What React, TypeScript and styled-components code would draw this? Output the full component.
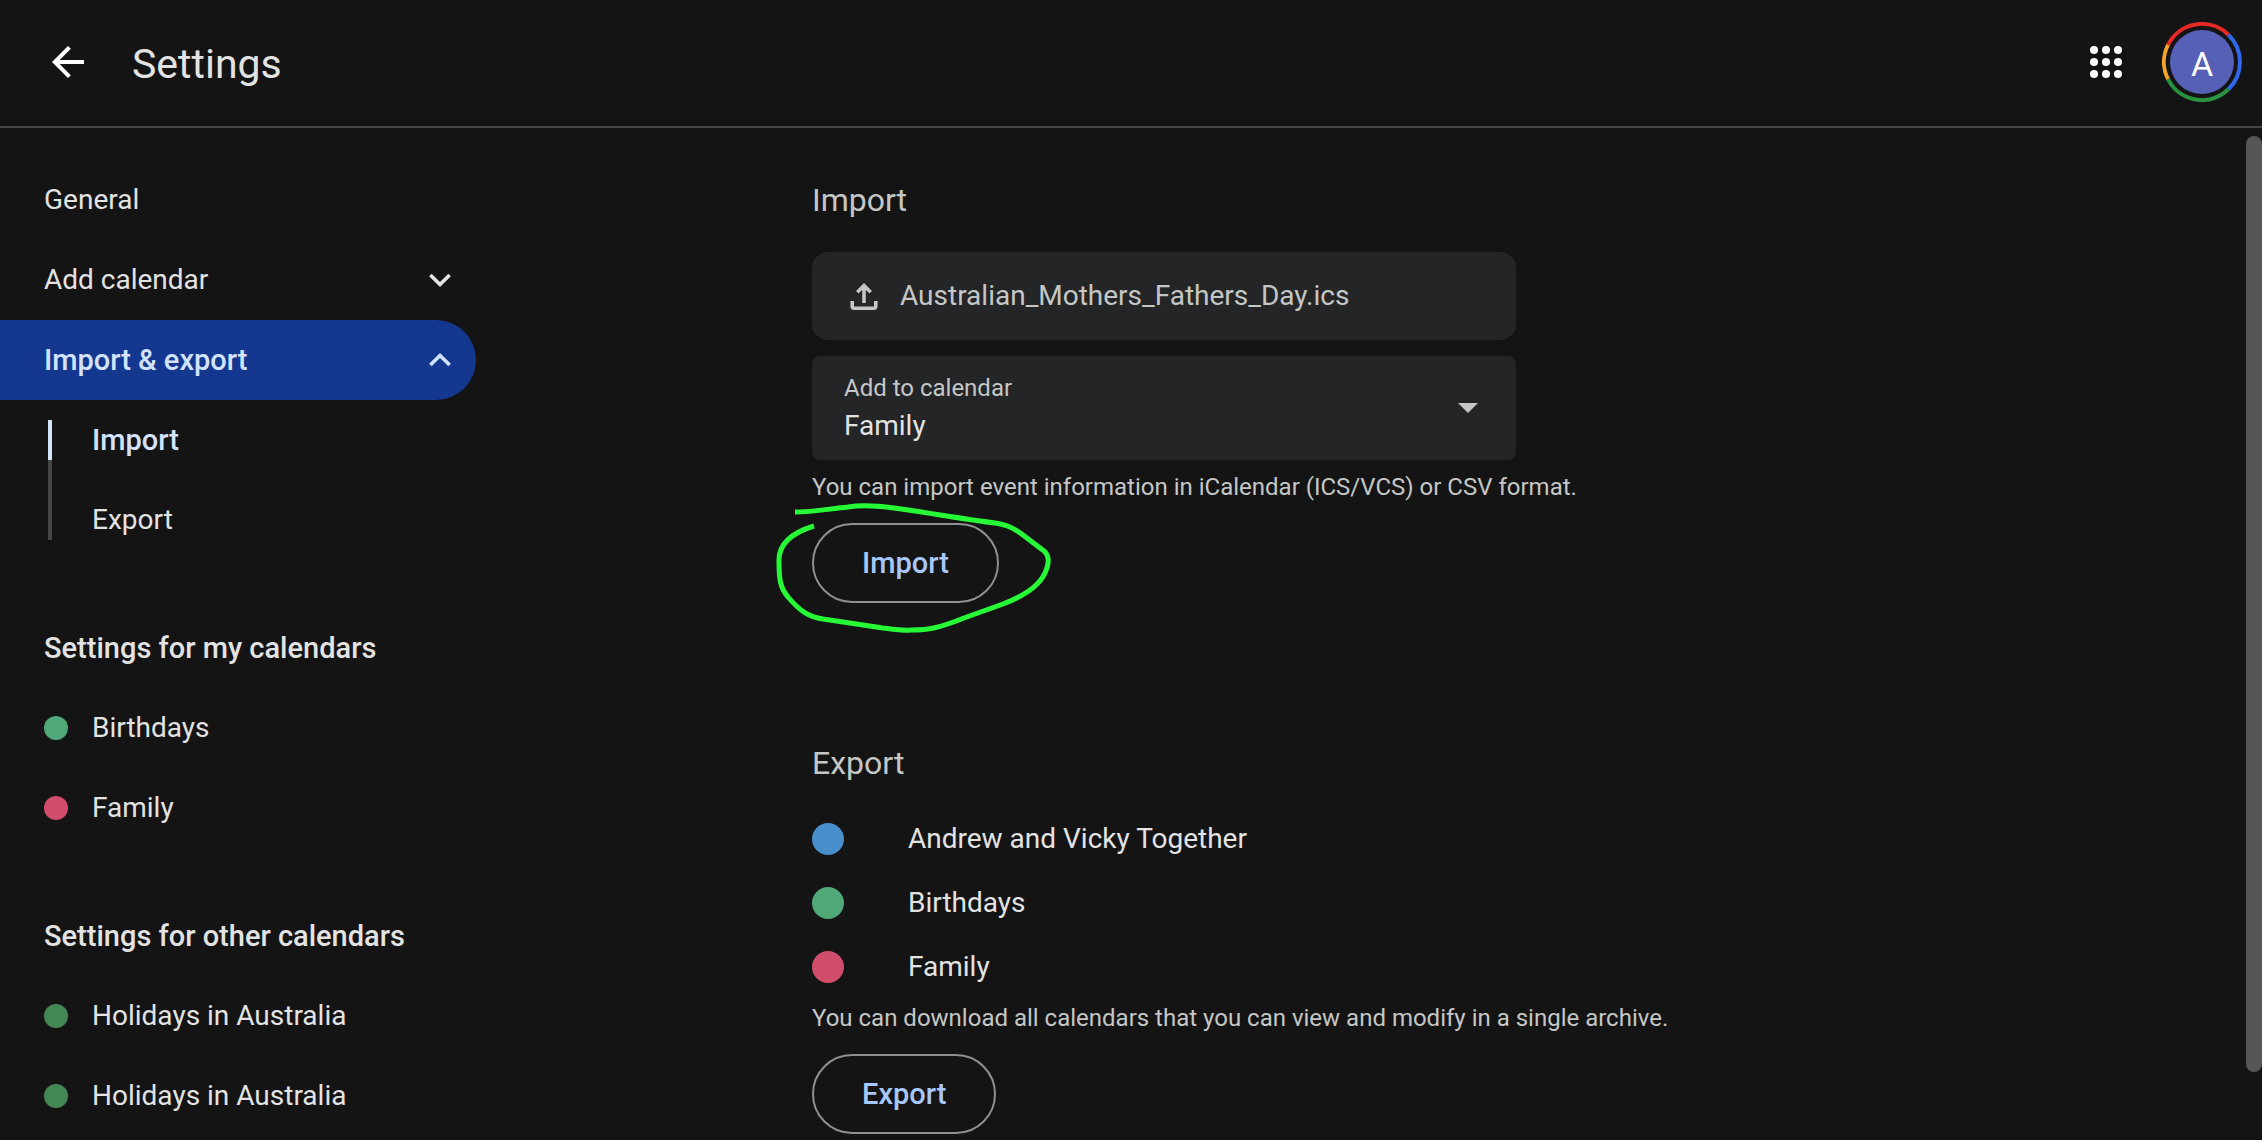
import React from "react";
import styled, { createGlobalStyle } from "styled-components";

const GlobalStyle = createGlobalStyle`
  *, *::before, *::after { box-sizing: border-box; }
  body {
    margin: 0;
    background: #141414;
    color: #e3e3e3;
    font-family: Roboto, "Liberation Sans", sans-serif;
    font-size: 28px;
    line-height: 40px;
  }
  button, select, input { font: inherit; color: inherit; }
  h1, h2, p, ul { margin: 0; padding: 0; }
  ul { list-style: none; }
  svg { display: block; flex: none; }
`;

const Page = styled.div`
  display: flex;
  flex-direction: column;
  height: 100vh;
  overflow: hidden;
`;

const TopBar = styled.header`
  display: flex;
  flex: none;
  align-items: center;
  height: 128px;
  padding: 0 20px 2px 44px;
  border-bottom: 2px solid #444746;
`;

const IconButton = styled.button`
  display: flex;
  padding: 0;
  border: 0;
  background: none;
  color: #fff;
  cursor: pointer;
`;

const Title = styled.h1`
  flex: 1;
  padding: 4px 0 0 40px;
  font-size: 41px;
  font-weight: 400;
  line-height: 48px;
`;

const AvatarButton = styled(IconButton)`
  position: relative;
  align-items: center;
  justify-content: center;
  width: 80px;
  height: 80px;
  margin-left: 32px;
`;

const AvatarRing = styled.svg`
  position: absolute;
  inset: 0;
`;

const AvatarDisc = styled.span`
  width: 64px;
  height: 64px;
  padding-top: 2px;
  border-radius: 50%;
  background: #5560b6;
  font-size: 34px;
  line-height: 64px;
  text-align: center;
`;

const Body = styled.div`
  display: flex;
  flex: 1;
  min-height: 0;
`;

const Sidebar = styled.nav`
  display: flex;
  flex: none;
  flex-direction: column;
  gap: 48px;
  width: 476px;
  padding-top: 32px;
`;

const NavButton = styled.button<{ $active?: boolean }>`
  display: flex;
  align-items: center;
  justify-content: space-between;
  width: 100%;
  height: 80px;
  padding: 0 24px 0 44px;
  border: 0;
  border-radius: 0 40px 40px 0;
  background: ${(p) => (p.$active ? "#14388f" : "none")};
  color: ${(p) => (p.$active ? "#d3e3fd" : "#e3e3e3")};
  font-size: ${(p) => (p.$active ? 29 : 28)}px;
  font-weight: ${(p) => (p.$active ? 500 : 400)};
  text-align: left;
  cursor: pointer;
`;

const SubList = styled.ul`
  position: relative;
  &::before {
    content: "";
    position: absolute;
    top: 20px;
    bottom: 20px;
    left: 48px;
    width: 4px;
    background: #444746;
  }
`;

const SubLink = styled.a<{ $active?: boolean }>`
  position: relative;
  display: flex;
  align-items: center;
  height: 80px;
  padding-left: 92px;
  color: ${(p) => (p.$active ? "#d3e3fd" : "#e3e3e3")};
  font-size: ${(p) => (p.$active ? 29 : 28)}px;
  font-weight: ${(p) => (p.$active ? 500 : 400)};
  text-decoration: none;
  &::before {
    content: "";
    display: ${(p) => (p.$active ? "block" : "none")};
    position: absolute;
    top: 20px;
    left: 48px;
    width: 4px;
    height: 40px;
    background: #d3e3fd;
  }
`;

const GroupTitle = styled.h2`
  padding: 20px 0 20px 44px;
  font-size: 29px;
  font-weight: 500;
  line-height: 40px;
`;

const CalendarLink = styled.a`
  display: flex;
  align-items: center;
  gap: 24px;
  height: 80px;
  padding-left: 44px;
  color: #e3e3e3;
  text-decoration: none;
`;

const Dot = styled.span<{ $color: string; $size: number }>`
  flex: none;
  width: ${(p) => p.$size}px;
  height: ${(p) => p.$size}px;
  border-radius: 50%;
  background: ${(p) => p.$color};
`;

const Content = styled.main`
  display: flex;
  flex: 1;
  flex-direction: column;
  gap: 136px;
  padding: 48px 0 0 336px;
`;

const Section = styled.section`
  display: flex;
  flex-direction: column;
  align-items: flex-start;
`;

const SectionTitle = styled.h2`
  color: #c4c7c5;
  font-size: 32px;
  font-weight: 400;
  line-height: 48px;
`;

const Fields = styled.div`
  display: grid;
  gap: 16px;
  width: 100%;
  max-width: 704px;
  padding: 28px 0 8px;
`;

const FileField = styled.label`
  display: flex;
  align-items: center;
  gap: 20px;
  height: 88px;
  padding: 0 36px;
  border-radius: 16px;
  background: #242527;
  color: #c4c7c5;
  cursor: pointer;
`;

const HiddenFile = styled.input`
  position: absolute;
  width: 1px;
  height: 1px;
  opacity: 0;
`;

const SelectField = styled.div`
  display: grid;
  align-items: center;
  border-radius: 8px;
  background: #242527;
  > * { grid-area: 1 / 1; }
`;

const SelectLabel = styled.label`
  align-self: start;
  padding: 16px 32px 0;
  color: #c4c7c5;
  font-size: 24px;
  line-height: 32px;
`;

const Select = styled.select`
  width: 100%;
  height: 104px;
  padding: 36px 32px 0;
  border: 0;
  border-radius: 8px;
  background: none;
  appearance: none;
  option { background: #242527; }
`;

const Caret = styled.svg`
  justify-self: end;
  margin-right: 38px;
  color: #c4c7c5;
  pointer-events: none;
`;

const Hint = styled.p`
  color: #c4c7c5;
  font-size: 24px;
  line-height: 38px;
`;

const Action = styled.div`
  position: relative;
  padding-top: 17px;
`;

const OutlineButton = styled.button`
  display: block;
  height: 80px;
  padding: 0 48px;
  border: 2px solid #8e918f;
  border-radius: 40px;
  background: none;
  color: #a8c7fa;
  font-size: 29px;
  font-weight: 500;
  cursor: pointer;
`;

const Highlight = styled.svg`
  position: absolute;
  top: -26px;
  left: -52px;
  pointer-events: none;
`;

const ExportList = styled.ul`
  padding: 20px 0 0;
`;

const ExportItem = styled.li`
  display: flex;
  align-items: center;
  gap: 64px;
  height: 64px;
`;

const ScrollTrack = styled.div`
  flex: none;
  width: 16px;
  padding: 8px 0;
`;

const ScrollThumb = styled.div`
  height: 94%;
  border-radius: 8px;
  background: #565656;
`;

const Chevron = ({ up }: { up?: boolean }) => (
  <svg width="24" height="24" viewBox="0 0 24 24" fill="none" stroke="currentColor" strokeWidth="3.6" aria-hidden="true">
    <path d={up ? "M2.4 17 12 7.500 21.600 17" : "M2.4 7 12 16.500 21.600 7"} />
  </svg>
);

const myCalendars = [
  { name: "Birthdays", color: "#51a877" },
  { name: "Family", color: "#d14d6c" },
];

const otherCalendars = [
  { name: "Holidays in Australia", color: "#438755" },
  { name: "Holidays in Australia", color: "#438755" },
];

const exportCalendars = [{ name: "Andrew and Vicky Together", color: "#488fcb" }, ...myCalendars];

type Calendar = { name: string; color: string };

const CalendarGroup = ({ title, items }: { title: string; items: Calendar[] }) => (
  <div>
    <GroupTitle>{title}</GroupTitle>
    <ul>
      {items.map((item, i) => (
        <li key={i}>
          <CalendarLink href="#">
            <Dot $color={item.color} $size={24} />
            {item.name}
          </CalendarLink>
        </li>
      ))}
    </ul>
  </div>
);

export default function App() {
  return (
    <Page>
      <GlobalStyle />
      <TopBar>
        <IconButton aria-label="Go back">
          <svg width="48" height="48" viewBox="0 0 24 24" fill="currentColor" aria-hidden="true">
            <path d="M20 11H7.83l5.59-5.59L12 4l-8 8 8 8 1.41-1.41L7.83 13H20v-2z" />
          </svg>
        </IconButton>
        <Title>Settings</Title>
        <IconButton aria-label="Google apps">
          <svg width="48" height="48" viewBox="0 0 48 48" fill="currentColor" aria-hidden="true">
            {[12, 24, 36].map((y) => [12, 24, 36].map((x) => <circle key={`${x}-${y}`} cx={x} cy={y} r="4" />))}
          </svg>
        </IconButton>
        <AvatarButton aria-label="Account">
          <AvatarRing width="80" height="80" viewBox="0 0 80 80" fill="none" strokeWidth="4" aria-hidden="true">
            <path d="M6 22.8A38 38 0 0 1 66.4 12.7" stroke="#e52a25" />
            <path d="M66.4 12.7A38 38 0 0 1 66.4 67.3" stroke="#2f68ea" />
            <path d="M66.4 67.3A38 38 0 0 1 6 57.2" stroke="#2a9342" />
            <path d="M6 57.2A38 38 0 0 1 6 22.8" stroke="#f5a42c" />
          </AvatarRing>
          <AvatarDisc>A</AvatarDisc>
        </AvatarButton>
      </TopBar>
      <Body>
        <Sidebar>
          <div>
            <NavButton>General</NavButton>
            <NavButton aria-expanded="false">
              Add calendar
              <Chevron />
            </NavButton>
            <NavButton $active aria-expanded="true">
              Import &amp; export
              <Chevron up />
            </NavButton>
            <SubList>
              <li>
                <SubLink $active href="#import">Import</SubLink>
              </li>
              <li>
                <SubLink href="#export">Export</SubLink>
              </li>
            </SubList>
          </div>
          <CalendarGroup title="Settings for my calendars" items={myCalendars} />
          <CalendarGroup title="Settings for other calendars" items={otherCalendars} />
        </Sidebar>
        <Content>
          <Section id="import">
            <SectionTitle>Import</SectionTitle>
            <Fields>
              <FileField>
                <HiddenFile type="file" />
                <svg width="32" height="32" viewBox="0 0 32 32" fill="none" stroke="currentColor" strokeWidth="3.6" aria-hidden="true">
                  <path d="M16 23V6M9.300 12.300 16 5.600l6.700 6.700" />
                  <path d="M4.200 21v5.200a2 2 0 0 0 2 2h19.600a2 2 0 0 0 2-2V21" />
                </svg>
                Australian_Mothers_Fathers_Day.ics
              </FileField>
              <SelectField>
                <SelectLabel htmlFor="target">Add to calendar</SelectLabel>
                <Select id="target" defaultValue="Family">
                  <option>Family</option>
                  <option>Birthdays</option>
                </Select>
                <Caret width="20" height="10" viewBox="0 0 20 10" fill="currentColor" aria-hidden="true">
                  <path d="M0 0h20L10 10z" />
                </Caret>
              </SelectField>
            </Fields>
            <Hint>You can import event information in iCalendar (ICS/VCS) or CSV format.</Hint>
            <Action>
              <OutlineButton>Import</OutlineButton>
              <Highlight width="308" height="160" viewBox="0 0 308 160" fill="none" stroke="#26fa37" strokeWidth="5" aria-hidden="true">
                <path d="M35 32C53 32 68 29 88 27C101 25 119 26 134 28C164 32 202 39 235 43C247 45 252 47 263 55L284 71C290 76 289 84 285 93C279 106 264 116 243 124L204 138C179 148 169 150 151 150C143 151 132 149 123 148L63 139C48 137 39 130 28 117C20 108 19 98 19 82C18 64 31 53 54 46" />
              </Highlight>
            </Action>
          </Section>
          <Section id="export">
            <SectionTitle>Export</SectionTitle>
            <ExportList>
              {exportCalendars.map((item) => (
                <ExportItem key={item.name}>
                  <Dot $color={item.color} $size={32} />
                  {item.name}
                </ExportItem>
              ))}
            </ExportList>
            <Hint>You can download all calendars that you can view and modify in a single archive.</Hint>
            <Action>
              <OutlineButton>Export</OutlineButton>
            </Action>
          </Section>
        </Content>
        <ScrollTrack aria-hidden="true">
          <ScrollThumb />
        </ScrollTrack>
      </Body>
    </Page>
  );
}
